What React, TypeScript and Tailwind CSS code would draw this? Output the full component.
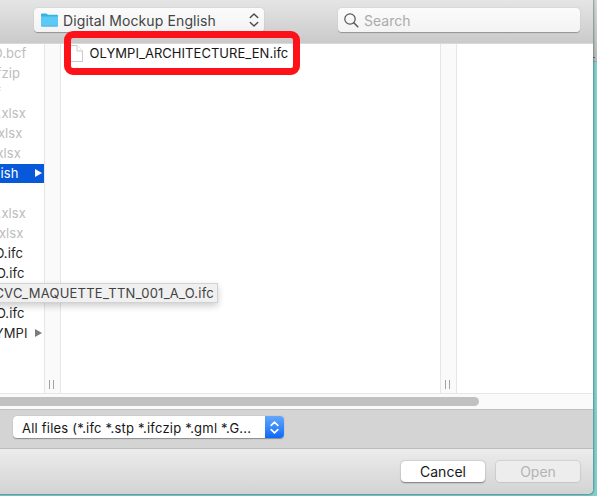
import React from "react";

type Row = { text: string; pad: string; tone: string };

const rows: Row[] = [
  { text: "O.bcf", pad: "pr-[17.5px]", tone: "text-[#bcbcbc]" },
  { text: "fzip", pad: "pr-[24px]", tone: "text-[#bcbcbc]" },
  { text: "f", pad: "pr-[43px]", tone: "text-[#bcbcbc]" },
  { text: ".xlsx", pad: "pr-[18px]", tone: "text-[#bcbcbc]" },
  { text: "xlsx", pad: "pr-[21.5px]", tone: "text-[#bcbcbc]" },
  { text: "xlsx", pad: "pr-[23px]", tone: "text-[#bcbcbc]" },
  { text: "ish", pad: "pr-[25.5px]", tone: "text-white" },
  { text: "", pad: "pr-[26px]", tone: "text-[#bcbcbc]" },
  { text: ".xlsx", pad: "pr-[18px]", tone: "text-[#bcbcbc]" },
  { text: "xlsx", pad: "pr-[20.5px]", tone: "text-[#bcbcbc]" },
  { text: "O.ifc", pad: "pr-[21px]", tone: "text-[#262626]" },
  { text: "O.ifc", pad: "pr-[19.5px]", tone: "text-[#262626]" },
  { text: "", pad: "pr-[20px]", tone: "text-[#262626]" },
  { text: "O.ifc", pad: "pr-[19.5px]", tone: "text-[#262626]" },
  { text: "YMPI", pad: "pr-[16.5px]", tone: "text-[#262626]" },
];

function Splitter() {
  return (
    <div className="flex w-[17px] shrink-0 items-end justify-center gap-[3px] border-x border-[#e6e6e6] bg-[#fafafa] pr-[2px] pb-[4px]">
      <span className="h-[9px] w-px bg-[#a2a2a2]" />
      <span className="h-[9px] w-px bg-[#a2a2a2]" />
    </div>
  );
}

function Chevrons({ className }: { className: string }) {
  return (
    <svg viewBox="0 0 10 14" className={className} fill="none" stroke="currentColor" strokeLinecap="round" strokeLinejoin="round">
      <path d="M1.3 4.6 5 1l3.7 3.6M1.3 9.4 5 13l3.7-3.6" />
    </svg>
  );
}

export default function App() {
  return (
    <div className="relative h-[496px] w-[597px] overflow-hidden bg-[#82cfcd] font-['Inter','Liberation_Sans',sans-serif] text-[13px]">
      <div className="absolute top-0 right-0 h-[62px] w-[6px] border-b border-[#a0a0a0] bg-gradient-to-b from-[#d8d8d8] to-[#b9b9b9]">
        <div className="mt-[57px] ml-[2px] h-px w-[2px] bg-[#397f92]" />
      </div>

      <div className="relative flex h-[494px] w-[593px] flex-col overflow-hidden rounded-br-[5px] bg-white shadow-[0_0_2px_0.5px_rgba(0,60,60,0.4)]">
        <header className="flex h-[44px] shrink-0 items-start border-b border-[#d9d9d9] bg-gradient-to-b from-[#e5e5e5] to-[#cacaca] pt-[8px]">
          <div className="ml-[34px] flex h-[24px] w-[230px] items-center rounded-[4px] bg-gradient-to-b from-[#fbfbfb] to-[#f3f3f3] pr-[5px] pl-[7px] shadow-[0_0.5px_1px_rgba(0,0,0,0.3)]">
            <svg viewBox="0 0 17 14" className="h-[14px] w-[17px]">
              <path d="M0 1.5Q0 .5 1 .5h4.2q.6 0 1 .5l.6.8H16q1 0 1 1V5H0Z" fill="#38b3df" />
              <path d="M0 3.6h17v9q0 1-1 1H1q-1 0-1-1Z" fill="#5dcaf6" />
              <path d="M0 12.6h17q0 1-1 1H1q-1 0-1-1Z" fill="#45b6e2" />
            </svg>
            <span className="ml-[5px] pt-px text-[14px] leading-[24px] tracking-[0.11px] whitespace-nowrap text-[#444]">Digital Mockup English</span>
            <Chevrons className="ml-auto h-[14px] w-[10px] stroke-[1.4] text-[#4a4a4a]" />
          </div>
          <div className="ml-[74px] flex h-[24px] w-[242px] items-center rounded-[4px] bg-gradient-to-b from-[#fbfbfb] to-[#f3f3f3] pl-[6px] shadow-[0_0.5px_1px_rgba(0,0,0,0.3)]">
            <svg viewBox="0 0 15 15" className="h-[15px] w-[15px]" fill="none" stroke="#555" strokeLinecap="round">
              <circle cx="6" cy="6" r="5.2" strokeWidth="1.2" />
              <path d="m9.8 9.8 4 4" strokeWidth="1.5" />
            </svg>
            <span className="ml-[5px] pt-px text-[14px] leading-[24px] text-[#ababab]">Search</span>
          </div>
        </header>

        <main className="flex h-[349px] shrink-0">
          <div className="-mt-px w-[44px] shrink-0 overflow-hidden">
            {rows.map((row, i) => (
              <div key={i} className={`relative flex h-[20px] w-[44px] items-center justify-end whitespace-nowrap ${row.pad} ${row.tone}`}>
                {i === 6 && <div className="absolute inset-x-0 top-[1px] h-[19px] bg-[#0759da]" />}
                <span className="relative leading-[20px] tracking-[0.1px]">{row.text}</span>
                {(i === 6 || i === 14) && (
                  <svg viewBox="0 0 7 8" className={`absolute top-[6px] left-[35px] h-[8px] w-[7px] ${i === 6 ? "text-white" : "text-[#7b7b7b]"}`}>
                    <path d="M0 0v8l7-4Z" fill="currentColor" />
                  </svg>
                )}
              </div>
            ))}
          </div>
          <Splitter />
          <section className="-mt-px w-[379px] shrink-0">
            <div className="flex h-[20px] items-center pl-[10px]">
              <svg viewBox="0 0 12 17" className="h-[17px] w-[12px]" fill="#fff" stroke="#c9c9c9" strokeWidth="1">
                <path d="M-2 .5h8l5.5 5.5v10.5H-2Z" />
                <path d="M6 .5V6h5.5" />
              </svg>
              <span className="ml-[6.5px] leading-[20px] tracking-[0.04px] whitespace-nowrap text-[#161616]">OLYMPI_ARCHITECTURE_EN.ifc</span>
            </div>
          </section>
          <Splitter />
        </main>

        <div className="h-[16px] shrink-0 border-t border-[#e7e7e7] bg-[#fafafa] pt-[3px]">
          <div className="h-[9px] w-[479px] rounded-r-full bg-[#c1c1c1]" />
        </div>

        <div className="flex h-[39px] shrink-0 items-start border-t border-[#c0c0c0] bg-[#d4d4d4] pt-[6px]">
          <div className="ml-[13px] flex h-[22px] w-[271px] overflow-hidden rounded-[4px] bg-white shadow-[0_0.5px_1px_rgba(0,0,0,0.35)]">
            <span className="grow pl-[9px] leading-[24px] tracking-[0.21px] whitespace-nowrap text-[#161616]">All files (*.ifc *.stp *.ifczip *.gml *.G...</span>
            <div className="flex w-[19px] shrink-0 items-center justify-center bg-gradient-to-b from-[#62a7fa] to-[#0768fb]">
              <Chevrons className="h-[13px] w-[9px] stroke-[1.8] text-white" />
            </div>
          </div>
        </div>

        <footer className="flex h-[46px] shrink-0 items-start justify-end gap-[11px] border-t border-[#bcbcbc] bg-gradient-to-b from-[#ececec] to-[#d3d3d3] pt-[12px] pr-[13px]">
          <button className="h-[21px] w-[84px] rounded-[4px] bg-white text-center text-[14px] leading-[21px] text-[#181818] shadow-[0_0.5px_1.5px_rgba(0,0,0,0.45)]">Cancel</button>
          <button className="h-[21px] w-[84px] rounded-[4px] bg-[#ededed] text-center text-[14px] leading-[21px] text-[#b4b4b4] shadow-[0_0_1px_1px_rgba(0,0,0,0.09)]">Open</button>
        </footer>
      </div>

      <div className="absolute top-[283px] -left-[10px] flex h-[20px] w-[228px] items-center justify-end border border-[#d2d2d2] bg-[#f0f0f0] pt-px pr-[3px] whitespace-nowrap text-[#424242] shadow-[0_3px_7px_rgba(0,0,0,0.2)]">
        <span className="tracking-[0.24px]">CVC_MAQUETTE_TTN_001_A_O.ifc</span>
      </div>

      <div className="absolute top-[31px] left-[64px] h-[44px] w-[236px] rounded-[9px] border-[7px] border-[#fe1219]" />
    </div>
  );
}
